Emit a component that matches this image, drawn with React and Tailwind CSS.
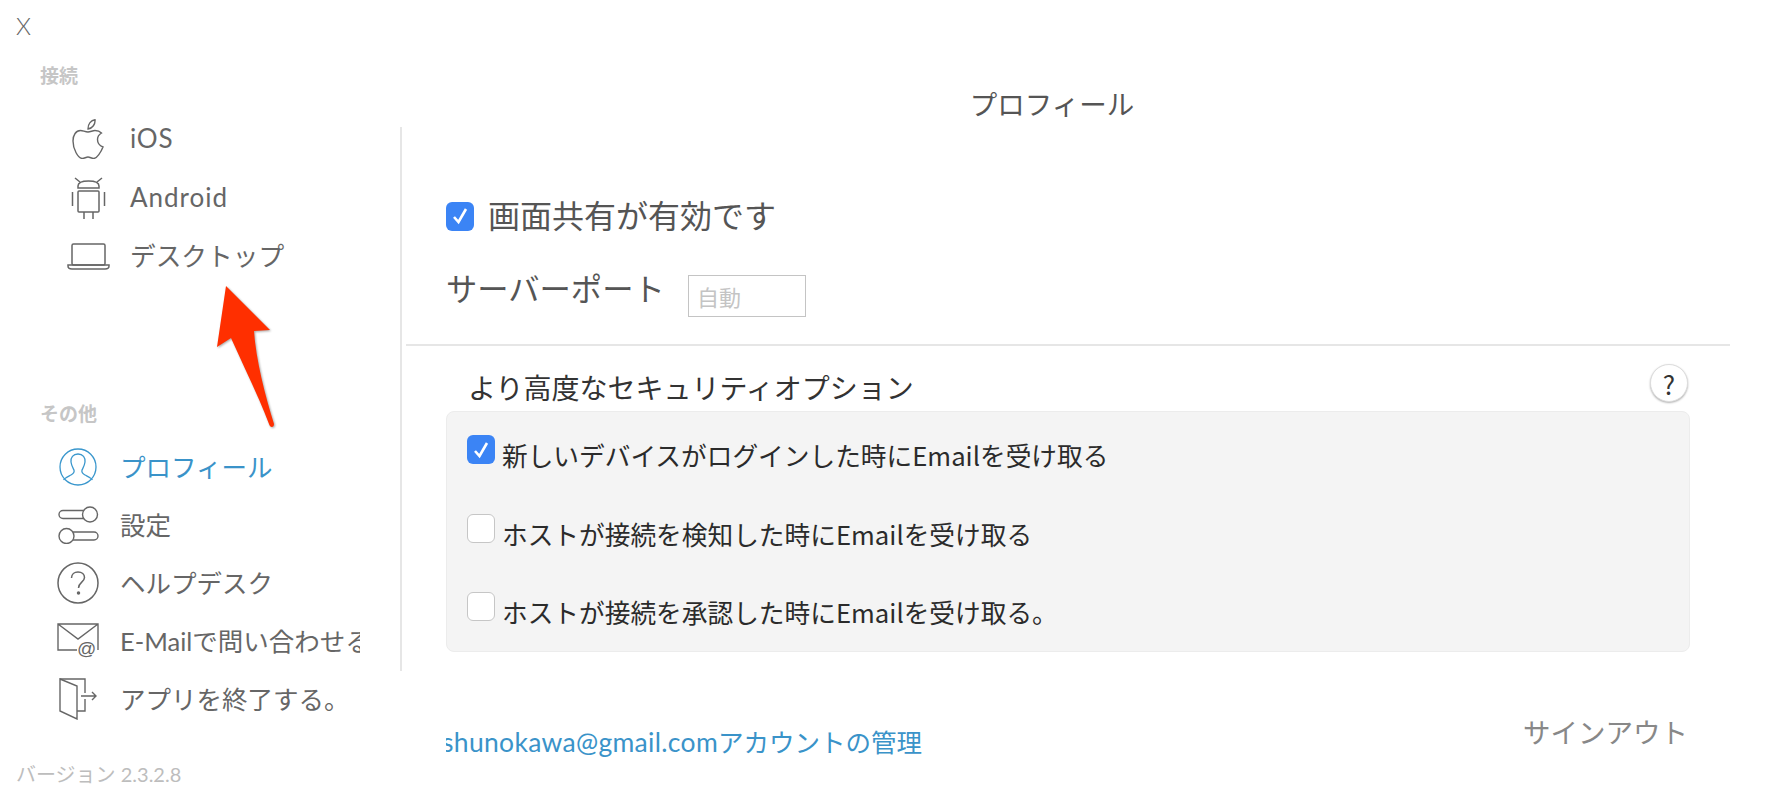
const sans = "font-['Lato','Noto_Sans_CJK_JP',sans-serif]";

function AppleIcon() {
  return (
    <svg width="32" height="40" viewBox="0 0 32 40" fill="none" stroke="#666" strokeWidth="1.4">
      <path d="M16 13 C13 13 11 11.5 8.5 11.5 C4 11.5 1 16 1 22 C1 30 6 39.5 10.5 39.5 C12.5 39.5 14 38 16 38 C18 38 19.5 39.5 21.5 39.5 C25 39.5 29 33 31 28 C27 26.5 25.5 23.5 25.5 20.5 C25.5 17.5 27 15.5 29.5 14 C27.5 12 25 11.5 23 11.5 C20.5 11.5 18.5 13 16 13 Z" />
      <path d="M16 10 C16 5 19 1.5 23 .8 C23.5 5 20.5 9.5 16 10 Z" />
    </svg>
  );
}

function AndroidIcon() {
  return (
    <svg width="35" height="42" viewBox="0 0 35 42" fill="none" stroke="#666" strokeWidth="1.5">
      <path d="M7 11 L7 9 C7 6 11 4 17.5 4 C24 4 28 6 28 9 L28 11 Z" />
      <path d="M4 1 L9 5 M31 1 L26 5" />
      <rect x="7" y="14" width="21" height="21" rx="1" />
      <path d="M1.5 15 V29 M33.5 15 V29 M13 35 V42 M22 35 V42" />
    </svg>
  );
}

function LaptopIcon() {
  return (
    <svg width="43" height="27" viewBox="0 0 43 27" fill="none" stroke="#666" strokeWidth="1.5">
      <rect x="5" y="1" width="33" height="21" rx="1.5" />
      <path d="M1 22 H42 V23 C42 25 40 26 38 26 H5 C3 26 1 25 1 23 Z" />
    </svg>
  );
}

function ProfileIcon() {
  return (
    <svg width="38" height="38" viewBox="0 0 38 38" fill="none" stroke="#3a97cd" strokeWidth="1.3">
      <circle cx="19" cy="19" r="18" />
      <path d="M19 6 C14 6 11.5 9.5 12 14 C12.5 18 14 20 15 22 C15.5 24 15 25.5 12 27 C9 28.5 6 29.5 4.5 32" />
      <path d="M19 6 C24 6 26.5 9.5 26 14 C25.5 18 24 20 23 22 C22.5 24 23 25.5 26 27 C29 28.5 32 29.5 33.5 32" />
    </svg>
  );
}

function SettingsIcon() {
  return (
    <svg width="41" height="38" viewBox="0 0 41 38" fill="none" stroke="#666" strokeWidth="1.4">
      <rect x="1" y="4.5" width="33" height="8" rx="4" />
      <circle cx="32" cy="8.5" r="7.5" fill="#fff" />
      <rect x="7" y="26" width="33" height="8" rx="4" />
      <circle cx="8.5" cy="30" r="7.5" fill="#fff" />
    </svg>
  );
}

function HelpIcon() {
  return (
    <svg width="42" height="42" viewBox="0 0 42 42" fill="none" stroke="#666" strokeWidth="1.5">
      <circle cx="21" cy="21" r="20" />
      <path d="M14.5 16 C14.5 12 17.5 10 21 10 C25 10 27.5 12.5 27.5 15.5 C27.5 20 21.5 20.5 21.5 26" />
      <circle cx="21.5" cy="31" r="1" fill="#666" />
    </svg>
  );
}

function MailIcon() {
  return (
    <svg width="42" height="36" viewBox="0 0 42 36" fill="none" stroke="#666" strokeWidth="1.4">
      <path d="M41 27 V1 H1 V27 H20 M1 1 L21 16 L41 1" />
      <text x="20" y="32" fontSize="19" fill="#666" stroke="none" fontFamily="Liberation Sans, sans-serif">@</text>
    </svg>
  );
}

function ExitIcon() {
  return (
    <svg width="38" height="42" viewBox="0 0 38 42" fill="none" stroke="#666" strokeWidth="1.4">
      <path d="M1 1 L18 8 V41 L1 33 Z" />
      <path d="M1 1 H26 V15 M26 21 V33 H18" />
      <path d="M22 18 H37 M33 14 L37 18 L33 22" />
    </svg>
  );
}

function Check({ on, className }) {
  return (
    <div
      className={`w-[28px] h-[29px] shrink-0 rounded-[6px] flex items-center justify-center ${
        on ? "bg-[#3b84f5]" : "bg-white border border-[#c6c6c6]"
      } ${className || ""}`}
    >
      {on && (
        <svg width="16" height="18" viewBox="0 0 16 18" fill="none" stroke="#fff" strokeWidth="2.6">
          <path d="M2 10 L6.5 15 L14 2" />
        </svg>
      )}
    </div>
  );
}

function ConnectRow({ icon, label, labelClass }) {
  return (
    <div className="h-[59px] flex items-center ml-[66px]">
      <div className="w-[44px] flex justify-center">{icon}</div>
      <span className={`ml-[20px] text-[#666] ${labelClass}`}>{label}</span>
    </div>
  );
}

function OtherRow({ icon, label, active }) {
  return (
    <div className="h-[58px] flex items-center ml-[56px]">
      <div className="w-[44px] flex justify-center">{icon}</div>
      <span
        className={`ml-[20px] w-[240px] overflow-hidden whitespace-nowrap text-[25.5px] ${
          active ? "text-[#3a93c9]" : "text-[#666]"
        }`}
      >
        {label}
      </span>
    </div>
  );
}

function OptionRow({ on, label }) {
  return (
    <div className="h-[78.5px] flex items-start pl-[20px]">
      <Check on={on} className="mt-[16px]" />
      <span className="ml-[7px] text-[25.7px] leading-[72px] text-[#2b2b2b]">{label}</span>
    </div>
  );
}

export default function App() {
  return (
    <div className={`relative w-[1770px] h-[798px] flex overflow-hidden bg-white ${sans}`}>
      {/* Sidebar */}
      <div className="w-[402px] shrink-0">
        <div className="h-[62px] pl-[16px] pt-[12px] text-[24px] leading-[28px] font-light text-[#666]">X</div>
        <div className="pl-[40px] text-[19px] leading-[28px] font-bold text-[#c6c6c6]">接続</div>
        <div className="mt-[37px] h-[544px] flex flex-col border-r-2 border-[#e6e6e6]">
          <div className="-mt-[18px]">
            <ConnectRow icon={<AppleIcon />} label="iOS" labelClass="text-[26px] tracking-[0.8px]" />
            <ConnectRow icon={<AndroidIcon />} label="Android" labelClass="text-[26px] tracking-[1px]" />
            <ConnectRow icon={<LaptopIcon />} label="デスクトップ" labelClass="text-[25.7px]" />
          </div>
          <div className="mt-[114px] pl-[40px] text-[19px] leading-[28px] font-bold text-[#c6c6c6]">その他</div>
          <div className="mt-[10px]">
            <OtherRow icon={<ProfileIcon />} label="プロフィール" active />
            <OtherRow icon={<SettingsIcon />} label="設定" />
            <OtherRow icon={<HelpIcon />} label="ヘルプデスク" />
            <OtherRow icon={<MailIcon />} label="E-Mailで問い合わせる" />
            <OtherRow icon={<ExitIcon />} label="アプリを終了する。" />
          </div>
        </div>
        <div className="mt-[89px] pl-[16px] text-[20px] leading-[28px] text-[#bdbdbd]">バージョン 2.3.2.8</div>
      </div>

      {/* Main */}
      <div className="flex-1 pl-[4px] font-['Noto_Sans_CJK_JP',sans-serif]">
        <div className="w-[1324px]">
          <div className="pt-[85px] pr-[32px] text-center text-[27.5px] leading-[36px] text-[#555]">プロフィール</div>
          <div className="mt-[75px] px-[40px] h-[40px] flex items-center">
            <Check on />
            <span className="ml-[14px] pb-[4px] text-[32px] leading-[40px] text-[#555]">画面共有が有効です</span>
          </div>
          <div className="mt-[33px] px-[40px] flex items-start">
            <span className="w-[242px] text-[31.3px] leading-[38px] text-[#555]">サーバーポート</span>
            <div className="mt-[6px] w-[118px] h-[42px] border border-[#c4c4c4] pl-[8px] text-[22px] leading-[40px] text-[#c4c4c4]">
              自動
            </div>
          </div>
          <div className="mt-[27px] h-[2px] bg-[#e6e6e6]" />
          <div className="mt-[24px] mx-[40px] h-[34px] pl-[22px] pr-[2px] flex items-center justify-between">
            <span className="text-[28px] leading-[34px] text-[#333]">より高度なセキュリティオプション</span>
            <div className="-mt-[8px] w-[38px] h-[38px] rounded-full bg-white border border-[#ddd] shadow-[0_1px_2px_rgba(0,0,0,0.3)] flex items-center justify-center text-[26px] text-[#333]">
              ?
            </div>
          </div>
          <div className="mt-[7px] mx-[40px] h-[241px] pt-[7px] rounded-[8px] bg-[#f4f4f4] border border-[#ececec]">
            <OptionRow on label="新しいデバイスがログインした時にEmailを受け取る" />
            <OptionRow label="ホストが接続を検知した時にEmailを受け取る" />
            <OptionRow label="ホストが接続を承認した時にEmailを受け取る。" />
          </div>
          <div className="mt-[61px] mx-[40px] flex items-start justify-between">
            <div className={`mt-[11px] w-[476px] overflow-hidden whitespace-nowrap flex justify-end text-[25.5px] leading-[36px] text-[#3a93c9] ${sans}`}>
              <span className="shrink-0">
                <span className="text-[26.5px] tracking-[0.3px]">shunokawa@gmail.com</span>アカウントの管理
              </span>
            </div>
            <span className="pr-[2px] text-[27.5px] leading-[36px] text-[#888]">サインアウト</span>
          </div>
        </div>
      </div>

      {/* Annotation arrow */}
      <svg className="absolute left-[210px] top-[280px] drop-shadow-[1px_1px_1px_rgba(0,0,0,0.35)]" width="70" height="155" viewBox="0 0 70 155">
        <path d="M16 6 L60 50 L44 51 C46 80 55 115 64 144 C64 148 60 148 59 144 C48 115 33 85 21 58 L7 67 Z" fill="#ff2f00" />
      </svg>
    </div>
  );
}
